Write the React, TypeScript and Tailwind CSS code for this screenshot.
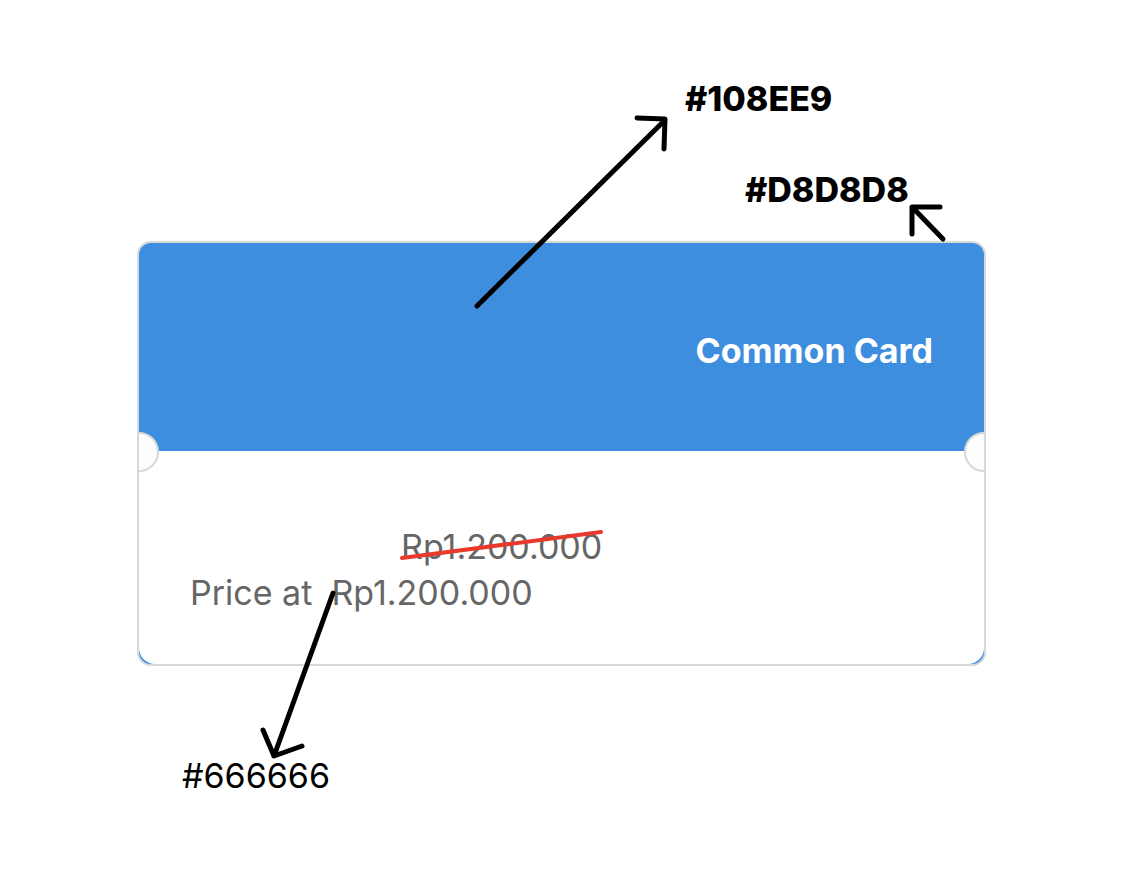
import React from "react";

const Notch = ({ side }: { side: "left" | "right" }) => (
  <div
    className={
      "absolute top-[189px] w-[40px] h-[40px] rounded-full bg-[#fdfdfd] border-2 border-[#d8d8d8] " +
      (side === "left" ? "-left-[20px]" : "-right-[20px]")
    }
  />
);

const Arrow = ({ d }: { d: string }) => (
  <path d={d} fill="none" stroke="#000" strokeWidth={5} strokeLinecap="round" strokeLinejoin="round" />
);

export default function App() {
  return (
    <div className="relative w-[1132px] h-[888px] bg-white overflow-hidden" style={{ fontFamily: "Inter, 'Noto Sans', sans-serif" }}>
      {/* annotation labels */}
      <div className="absolute left-[685px] top-[82px] text-[34px] font-extrabold text-black leading-none">#108EE9</div>
      <div className="absolute left-[745px] top-[173px] text-[34px] font-extrabold text-black leading-none">#D8D8D8</div>
      <div className="absolute left-[182px] top-[759px] text-[34px] text-black leading-none">#666666</div>

      {/* card */}
      <div className="pt-[241px] pl-[137px]">
        <div className="relative w-[849px] h-[425px] rounded-[14px] overflow-hidden border-2 border-[#d8d8d8] bg-[#3e8ee0] flex flex-col">
          <div className="h-[208px] flex items-center justify-end pr-[51px] pt-[6px]">
            <span className="text-white text-[34px] font-bold">Common Card</span>
          </div>
          <div className="flex-1 bg-white rounded-b-[16px] flex flex-col pt-[78px]">
            <div className="pl-[262px] text-[34px] leading-[36px] text-[#666666]">Rp1.200.000</div>
            <div className="pl-[51px] text-[34px] leading-[36px] text-[#666666] mt-[10px]">
              Price at&nbsp;&nbsp;Rp1.200.000
            </div>
          </div>
          <Notch side="left" />
          <Notch side="right" />
        </div>
      </div>

      {/* red strike + arrows overlay */}
      <svg className="absolute left-0 top-0" width={1132} height={888}>
        <line x1={402} y1={558} x2={601} y2={532} stroke="#e8392b" strokeWidth={4} strokeLinecap="round" />
        <Arrow d="M477 306 L665 120 M637 118 L665 119 L664 149" />
        <Arrow d="M943 239 L913 208 M940 207 L912 207 L912 234" />
        <Arrow d="M333 593 L274 756 M263 730 L274 756 L302 746" />
      </svg>
    </div>
  );
}
